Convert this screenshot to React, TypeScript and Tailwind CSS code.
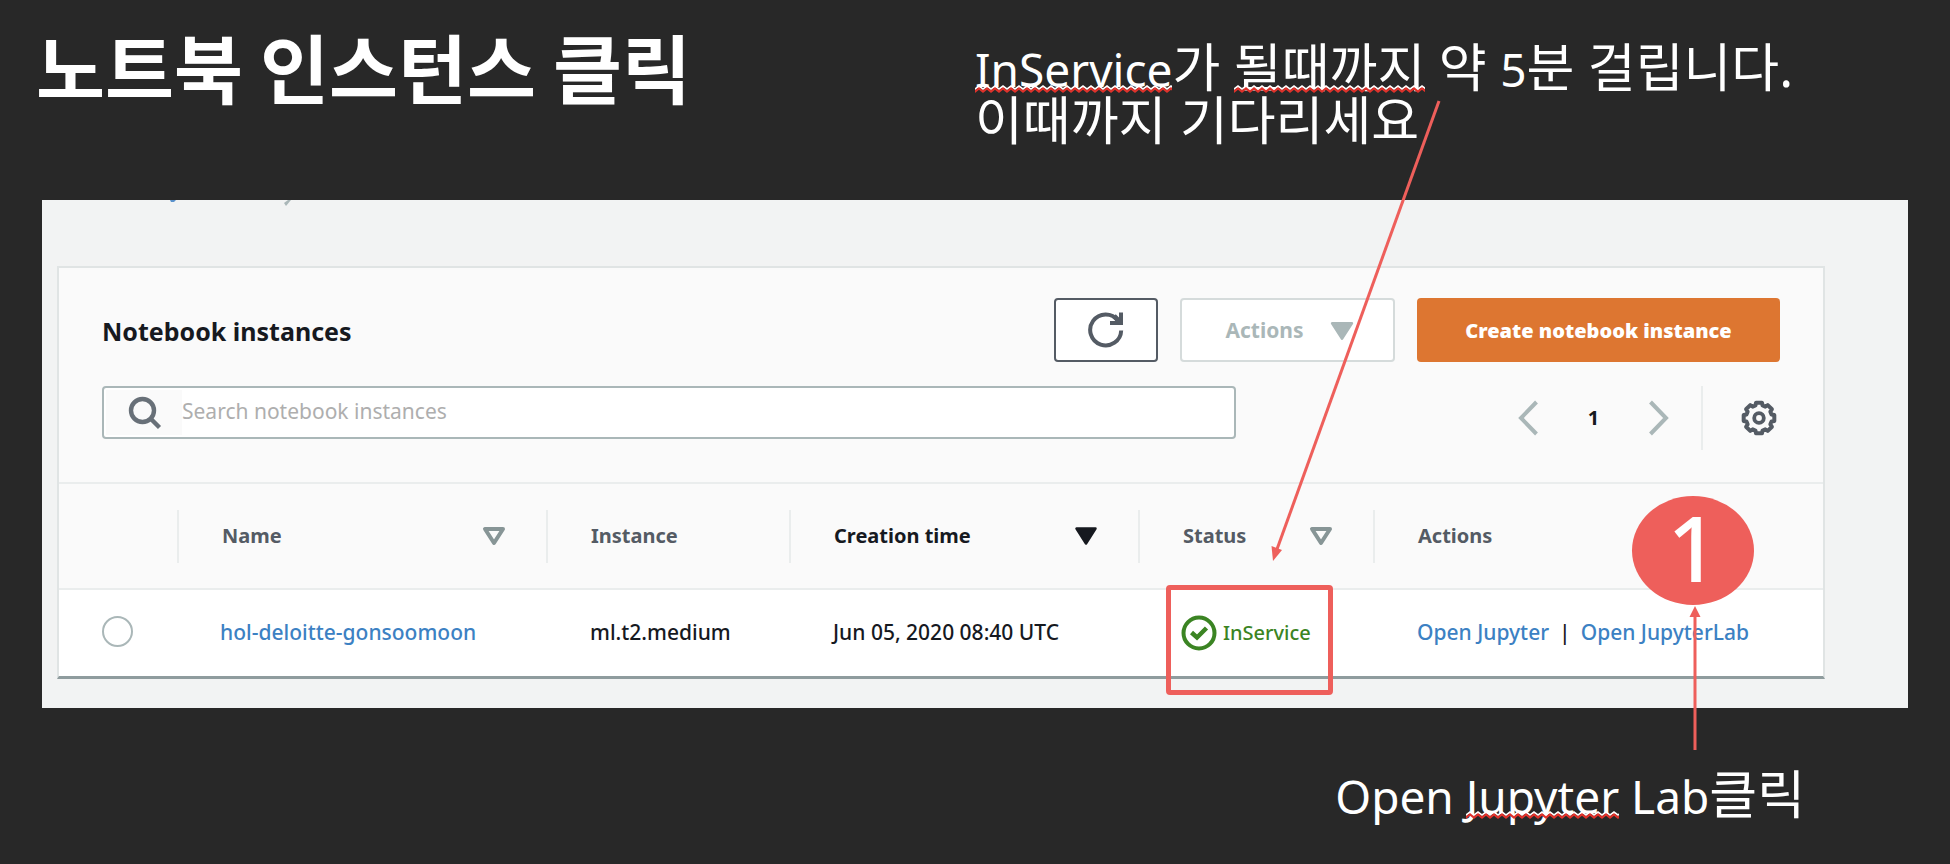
import type { ReactNode } from "react";

const CALLOUT = "font-['Noto_Sans','Noto_Sans_CJK_KR',sans-serif] text-[52px] leading-[53px] whitespace-nowrap";
const LATIN = "text-[46px] leading-none";

function Misspelled({ id, children }: { id: string; children: ReactNode }) {
  return (
    <span className="relative inline-block">
      {children}
      <svg className="absolute bottom-0 left-0 h-2 w-full" aria-hidden="true">
        <defs>
          <pattern id={id} width="8" height="8" patternUnits="userSpaceOnUse">
            <path d="M-1 5 0 4 4 1 8 4 9 5" fill="none" stroke="#fff" strokeWidth="1.6" />
            <path d="M-1 7.6 0 6.600 4 3.400 8 6.600 9 7.600" fill="none" stroke="#e0322b" strokeWidth="2" />
          </pattern>
        </defs>
        <rect width="100%" height="8" fill={`url(#${id})`} />
      </svg>
    </span>
  );
}

function SortIcon({ active = false }: { active?: boolean }) {
  return (
    <svg width="24" height="20" viewBox="0 0 24 20" aria-hidden="true">
      {active ? (
        <path d="M2.5 2.5h19L12 17.5z" fill="#16191f" stroke="#16191f" strokeWidth="2.5" strokeLinejoin="round" />
      ) : (
        <path d="M3 3h18L12 17z" fill="none" stroke="#879596" strokeWidth="4" strokeLinejoin="round" />
      )}
    </svg>
  );
}

function HeaderCell({
  label,
  sort,
  children,
}: {
  label: string;
  sort?: "active" | "idle";
  children?: ReactNode;
}) {
  return (
    <th scope="col" className="relative p-0 text-left font-bold">
      <div
        className={`flex h-[53px] items-center justify-between border-l-2 border-[#eaeded] pl-[43px] pr-10 ${
          sort === "active" ? "text-[#16191f]" : "text-[#545b64]"
        }`}
      >
        {sort ? (
          <button type="button" className="flex w-full items-center justify-between">
            {label}
            <SortIcon active={sort === "active"} />
          </button>
        ) : (
          label
        )}
      </div>
      {children}
    </th>
  );
}

function gearOutline() {
  const points: string[] = [];
  const add = (deg: number, r: number) => {
    const a = (deg * Math.PI) / 180;
    points.push(`${(18 + r * Math.sin(a)).toFixed(2)},${(18 - r * Math.cos(a)).toFixed(2)}`);
  };
  for (let t = 0; t < 360; t += 45) {
    add(t - 11, 15.6);
    add(t + 11, 15.6);
    add(t + 16, 13);
    add(t + 29, 13);
  }
  return points.join(" ");
}

function GearIcon() {
  return (
    <svg width="36" height="36" viewBox="0 0 36 36" fill="none" stroke="#545b64" aria-hidden="true">
      <polygon points={gearOutline()} strokeWidth="4" strokeLinejoin="round" />
      <circle cx="18" cy="18" r="4.8" strokeWidth="3.8" />
    </svg>
  );
}

export default function App() {
  return (
    <main className="flex min-h-screen flex-col bg-[#282828] font-['Noto_Sans','Noto_Sans_CJK_KR',sans-serif]">
      <header className="grid h-[200px] grid-cols-2 text-white">
        <h1 className="pl-9 pt-3 font-['Noto_Sans_CJK_KR',sans-serif] text-[75px] font-bold leading-[108px] whitespace-nowrap">
          노트북 인스턴스 클릭
        </h1>
        <p className={`pt-10 ${CALLOUT}`}>
          <Misspelled id="wave-service">
            <span className={LATIN}>InService</span>
          </Misspelled>
          가 <Misspelled id="wave-until">될때까지</Misspelled> 약 <span className={LATIN}>5</span>분 걸립니다.
          <br />
          이때까지 기다리세요
        </p>
      </header>

      <section className="mx-[42px] bg-[#f2f3f3] pb-[29px] pl-[15px] pr-[83px]">
        <svg className="block h-[66px] w-full" aria-hidden="true">
          <path d="M113 0h6l-2 2h-3z" fill="#5b92cc" />
          <path d="M227 3l4-3h3l-5 6z" fill="#aab7b8" />
        </svg>
        <div className="border-2 border-b-[3px] border-[#e0e4e4] border-b-[#8f9c9e] bg-[#fafafa]">
          <div className="flex items-center gap-[22px] px-[43px] pt-[30px]">
            <h2 className="flex-1 pt-1 text-[25px] font-bold text-[#16191f]">Notebook instances</h2>
            <button
              type="button"
              aria-label="Refresh"
              className="flex h-16 w-[104px] items-center justify-center rounded-sm border-2 border-[#545b64] bg-white"
            >
              <svg width="38" height="38" viewBox="0 0 38 38" fill="none" stroke="#545b64" strokeWidth="4" aria-hidden="true">
                <path d="M34.2 19.5A15.5 15.5 0 1 1 31 9.5" />
                <path d="M34 1.5v10.500H23" />
                <path d="M34 12 27 5" strokeWidth="5" />
              </svg>
            </button>
            <button
              type="button"
              disabled
              className="flex h-16 w-[215px] items-center justify-center gap-[26px] rounded-sm border-2 border-[#d5dbdb] bg-white pl-1 pt-0.5 text-[21px] font-bold text-[#aab7b8]"
            >
              Actions
              <svg width="24" height="20" viewBox="0 0 22 18" aria-hidden="true">
                <path d="M2 2h18L11 16z" fill="#aab7b8" stroke="#aab7b8" strokeWidth="2.5" strokeLinejoin="round" />
              </svg>
            </button>
            <button type="button" className="h-16 w-[363px] rounded-sm bg-[#dd7631] pt-0.5 text-[20px] font-black text-white">
              Create notebook instance
            </button>
          </div>

          <div className="flex items-start justify-between px-[43px] pb-8 pt-6">
            <div className="flex h-[53px] w-[1134px] items-stretch rounded-sm border-2 border-[#aab7b8] bg-white p-0.5">
              <label htmlFor="search" className="flex w-[76px] items-center bg-[#fafafa] pl-[22px]" aria-label="Search">
                <svg width="34" height="34" viewBox="0 0 34 34" fill="none" stroke="#687078" strokeWidth="4.4" aria-hidden="true">
                  <circle cx="14.5" cy="14.5" r="11.5" />
                  <path d="M22.5 22.5 31.5 31.5" />
                </svg>
              </label>
              <input
                id="search"
                type="text"
                placeholder="Search notebook instances"
                className="flex-1 bg-white pb-0.5 text-[21px] outline-none placeholder:text-[#aeaeae]"
              />
            </div>
            <nav className="flex h-16 items-center" aria-label="Pages">
              <button type="button" aria-label="Previous page">
                <svg width="20" height="36" viewBox="0 0 20 36" fill="none" stroke="#aab7b8" strokeWidth="4" aria-hidden="true">
                  <path d="M18.5 2 3 18 18.5 34" />
                </svg>
              </button>
              <span className="w-[111px] text-center text-[20px] font-bold text-[#16191f]">1</span>
              <button type="button" aria-label="Next page">
                <svg width="20" height="36" viewBox="0 0 20 36" fill="none" stroke="#aab7b8" strokeWidth="4" aria-hidden="true">
                  <path d="M1.5 2 17 18 1.5 34" />
                </svg>
              </button>
              <span className="ml-8 h-full border-l-2 border-[#eaeded] pr-[38px]" />
              <button type="button" aria-label="Settings" className="mr-[3px]">
                <GearIcon />
              </button>
            </nav>
          </div>

          <table className="w-full table-fixed border-collapse text-[21px] font-medium text-[#16191f]">
            <colgroup>
              <col className="w-[118px]" />
              <col className="w-[369px]" />
              <col className="w-[243px]" />
              <col className="w-[349px]" />
              <col className="w-[235px]" />
              <col />
            </colgroup>
            <thead className="text-[20px]">
              <tr className="h-[106px] border-y-2 border-[#eaeded]">
                <td />
                <HeaderCell label="Name" sort="idle" />
                <HeaderCell label="Instance" />
                <HeaderCell label="Creation time" sort="active" />
                <HeaderCell label="Status" sort="idle">
                  <svg
                    className="pointer-events-none absolute bottom-[26px] left-[127px] z-10"
                    width="180"
                    height="462"
                    viewBox="0 0 180 462"
                    aria-hidden="true"
                  >
                    <path d="M174 1 11 452" stroke="#ee5f5b" strokeWidth="3" />
                    <path d="M8 461 6.500 446 17 450z" fill="#ee5f5b" />
                  </svg>
                </HeaderCell>
                <HeaderCell label="Actions" />
              </tr>
            </thead>
            <tbody>
              <tr className="h-[87px] bg-white">
                <td className="p-0 pb-1 pl-[43px] align-middle">
                  <input
                    type="radio"
                    aria-label="Select hol-deloitte-gonsoomoon"
                    className="block size-[31px] appearance-none rounded-full border-2 border-[#aab7b8] bg-white"
                  />
                </td>
                <td className="p-0 pl-[43px]">
                  <a href="#instance" className="text-[#3c81c3]">
                    hol-deloitte-gonsoomoon
                  </a>
                </td>
                <td className="p-0 pl-11">ml.t2.medium</td>
                <td className="p-0 pl-11">Jun 05, 2020 08:40 UTC</td>
                <td className="relative p-0 pl-[43px]">
                  <span className="flex items-center gap-1.5 text-[20px] text-[#3b8423]">
                    <svg width="36" height="36" viewBox="0 0 36 36" fill="none" stroke="#3b8423" strokeWidth="4" aria-hidden="true">
                      <circle cx="18" cy="18" r="15.500" />
                      <path d="M10.500 17.500 16 22.500 25.500 13" strokeWidth="4.500" />
                    </svg>
                    InService
                  </span>
                  <span className="absolute left-[28px] top-[-5px] h-[110px] w-[167px] rounded-sm border-[5px] border-[#ee5f5b]" />
                </td>
                <td className="relative p-0 pl-11">
                  <div className="flex gap-2.5 whitespace-nowrap">
                    <a href="#jupyter" className="text-[#3c81c3]">
                      Open Jupyter
                    </a>
                    <span>|</span>
                    <a href="#jupyterlab" className="text-[#3c81c3]">
                      Open JupyterLab
                    </a>
                  </div>
                  <strong className="absolute left-[259px] top-[-94px] flex h-[109px] w-[122px] items-center justify-center rounded-[50%] bg-[#ee5f5b] pb-2 text-[90px] font-medium leading-none text-white">
                    1
                  </strong>
                  <svg
                    className="pointer-events-none absolute left-[315px] top-4 z-10"
                    width="14"
                    height="144"
                    viewBox="0 0 14 144"
                    aria-hidden="true"
                  >
                    <path d="M7 8V144" stroke="#ee5f5b" strokeWidth="3" />
                    <path d="M7 0 12.500 11h-11z" fill="#ee5f5b" />
                  </svg>
                </td>
              </tr>
            </tbody>
          </table>
        </div>
      </section>

      <footer className="flex flex-1 justify-end pr-[145px] pt-[59px] text-white">
        <p className={CALLOUT}>
          <span className={LATIN}>
            Open <Misspelled id="wave-jupyter">Jupyter</Misspelled> Lab
          </span>
          클릭
        </p>
      </footer>
    </main>
  );
}
